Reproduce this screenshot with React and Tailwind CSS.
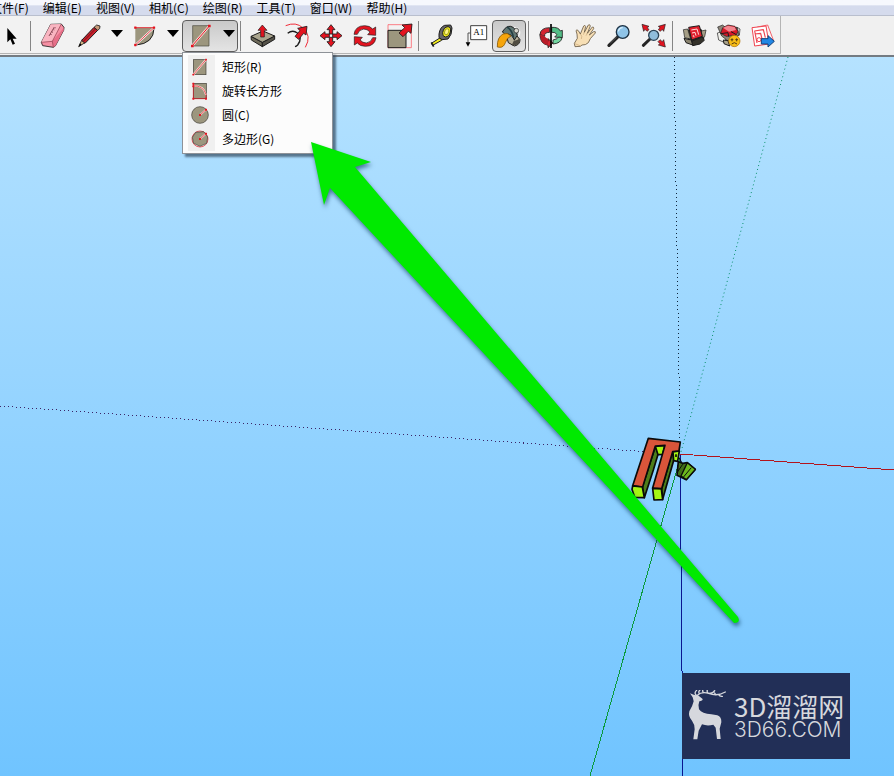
const MENUS = ['文件(F)', '编辑(E)', '视图(V)', '相机(C)', '绘图(R)', '工具(T)', '窗口(W)', '帮助(H)']

const RED = '#e3131f'
const INK = '#1c1c1c'
const CLAY = '#9c967e'

/* Toolbar drawings share a 90-unit grid shown at 30px */
function Icon({ children }) {
  return (
    <svg
      className="h-[30px] w-[30px] shrink-0"
      viewBox="0 0 90 90"
      fill="none"
      stroke={INK}
      strokeWidth="3"
      strokeLinejoin="round"
      aria-hidden="true"
    >
      {children}
    </svg>
  )
}

function Dots({ points, size = 7 }) {
  return points.map(([x, y]) => (
    <rect key={`${x}-${y}`} x={x - size / 2} y={y - size / 2} width={size} height={size} rx="1" fill={RED} stroke="none" />
  ))
}

const SelectIcon = () => (
  <Icon>
    <path d="M34 21V64L43 55L50 71L57 68L50 53H62Z" fill="#000" stroke="none" />
  </Icon>
)

const EraserIcon = () => (
  <Icon>
    <path d="M38 10L70 9L78 19L77 28L52 75L46 79L14 74L10 64Z" fill="#f58fa3" strokeWidth="2.5" />
    <path d="M38 10L70 9L43 60L10 64Z" fill="#f9b5c1" stroke="none" />
    <path d="M43 60L78 20L77 28L52 75L46 79Z" fill="#e66f88" stroke="none" />
    <path d="M10 64L43 61L70 9M43 61L46 79" strokeWidth="2" stroke="#8d3c4c" />
    <path d="M49 18L33 45M53 20L50 22M49 27L46 26M45 34L40 32M41 41L36 39" strokeWidth="3" stroke="#8a4a58" />
  </Icon>
)

const PencilIcon = () => (
  <Icon>
    <path d="M20 77L29 58L39 65Z" fill="#d9b98a" strokeWidth="2.5" />
    <path d="M29 58L66 19L77 28L39 67Z" fill="#c8202c" strokeWidth="3" />
    <path d="M34 61L72 22" stroke="#7b1018" strokeWidth="3" />
    <path d="M66 19L74 12L84 15L83 23L77 28Z" fill="#c79a77" strokeWidth="2.5" />
    <path d="M20 77L24 67L29 71Z" fill="#000" stroke="none" />
  </Icon>
)

const ArcIcon = () => (
  <Icon>
    <path d="M22 20H78Q78 68 22 72Z" fill={CLAY} stroke="none" />
    <path d="M78 22Q77 68 24 72" strokeWidth="3" />
    <path d="M22 72L78 20" stroke="#fff" strokeWidth="6" />
    <path d="M22 20H78L22 72" stroke={RED} strokeWidth="2.5" />
    <Dots points={[[22, 20], [78, 20], [22, 72]]} />
  </Icon>
)

const RectangleIcon = () => (
  <Icon>
    <rect x="26" y="14" width="49" height="61" fill={CLAY} strokeWidth="2" stroke="#4a483e" />
    <path d="M24 75L76 15" stroke="#fbe3df" strokeWidth="7" />
    <path d="M24 75L76 15" stroke={RED} strokeWidth="3" />
    <Dots points={[[25, 75], [76, 15]]} size={8} />
  </Icon>
)

const PushPullIcon = () => (
  <Icon>
    <path d="M9 46L43 64V77L10 57Z" fill="#6f6b5a" />
    <path d="M43 64L80 45V55L43 77Z" fill="#57544a" />
    <path d="M9 46L45 30L80 45L43 64Z" fill="#aaa58e" />
    <path d="M43 12L57 28H49V48H38V28H30Z" fill={RED} strokeWidth="2" />
  </Icon>
)

const OffsetIcon = () => (
  <Icon>
    <path d="M11 14Q42 1 63 21Q90 44 70 79" stroke="#f02b38" />
    <path d="M17 37Q32 25 46 36Q63 50 47 72Q43 76 39 77" strokeWidth="4" />
    <path d="M75 16L72 42L65 37L50 55L39 46L54 29L47 22Z" fill={RED} strokeWidth="2.5" />
  </Icon>
)

const MoveIcon = () => (
  <Icon>
    {[0, 90, 180, 270].map((angle) => (
      <path
        key={angle}
        d="M45 11L57 26H50V39H40V26H33Z"
        transform={`rotate(${angle} 45 44)`}
        fill={RED}
        strokeWidth="2.5"
      />
    ))}
  </Icon>
)

const RotateIcon = () => (
  <Icon>
    {[0, 180].map((angle) => (
      <path
        key={angle}
        d="M12 40Q16 14 44 14Q60 14 68 24L77 18V43L53 41L60 33Q52 24 41 24Q26 26 22 40Z"
        transform={`rotate(${angle} 45 45)`}
        fill={RED}
        strokeWidth="2"
      />
    ))}
  </Icon>
)

const ScaleIcon = () => (
  <Icon>
    <rect x="12" y="11" width="70" height="69" stroke="#ff4550" strokeWidth="2" />
    <rect x="12" y="28" width="54" height="52" fill={CLAY} />
    <path d="M84 9L81 37L73 31L57 47L45 36L62 20L54 12Z" fill={RED} strokeWidth="2.5" />
  </Icon>
)

const TapeIcon = () => (
  <Icon>
    <path d="M16 67L43 50L47 58L20 73Z" fill="#f4ee1c" />
    <path d="M16 64L23 77" strokeWidth="5" />
    <path d="M39 39Q42 18 56 13L74 12L78 21Q78 42 66 54L48 56L39 50Z" fill="#67666a" />
    <path d="M50 35Q53 18 66 17Q76 18 73 33Q70 47 58 48Q48 46 50 35Z" fill="#f4ee1c" />
    <ellipse cx="62" cy="32" rx="6" ry="9" fill="#fff68a" stroke="#a8a51a" transform="rotate(20 62 32)" />
  </Icon>
)

const TextIcon = () => (
  <Icon>
    <rect x="32" y="14" width="48" height="42" fill="#fff" strokeWidth="2.5" />
    <path d="M32 36H24V65" stroke="#555" strokeWidth="3" />
    <path d="M17 64H31L24 77Z" fill="#000" stroke="none" />
    <text x="56" y="43" fontSize="27" textAnchor="middle" fontFamily="Liberation Serif, serif" fill="#000" stroke="none">
      A1
    </text>
  </Icon>
)

const PaintIcon = () => (
  <Icon>
    <path d="M37 39Q52 13 71 22Q82 35 73 45" stroke="#f5f5f5" strokeWidth="4" />
    <path d="M37 42L60 34L78 56Q78 72 61 75L43 65Z" fill="#b8b19a" strokeWidth="3" />
    <path d="M25 33Q36 14 50 16Q66 20 70 43L61 57Q53 36 33 39Z" fill="#617774" strokeWidth="3" />
    <path d="M39 18Q55 27 58 49" stroke="#243f43" strokeWidth="5" />
    <circle cx="67" cy="29" r="7" fill="#d9d9d0" strokeWidth="2" />
    <path d="M60 58Q70 60 77 52L78 62Q68 76 53 73Z" fill="#514d42" stroke="none" />
    <path d="M10 78Q9 49 27 39Q40 33 51 45Q38 51 34 65Q29 79 18 79Z" fill="#f6a50b" stroke="#8a5c0c" strokeWidth="2.5" />
  </Icon>
)

const OrbitIcon = () => (
  <Icon>
    <path d="M47 19Q68 18 73 30L79 28V50L56 48L63 41Q58 32 47 34Z" fill="#53bd87" strokeWidth="2.5" />
    <path d="M78 50Q75 67 51 69V57Q66 54 68 48Z" fill="#73d7a1" strokeWidth="2.5" />
    <path d="M41 20Q14 20 12 40Q12 57 36 61V53L51 66L36 80V73Q11 68 12 40L26 46Q24 34 41 34Z" fill="#d42431" strokeWidth="2.5" />
    <path d="M12 40L26 46Q29 52 36 53V73Q13 68 12 40Z" fill="#b81c28" stroke="none" />
    <path d="M45 9V81" stroke="#000" strokeWidth="5" />
  </Icon>
)

const HandIcon = () => (
  <Icon>
    <path
      d="M13 67L22 52Q22 38 18 29Q20 24 25 29L31 39L41 15Q45 11 47 16L43 34L55 12Q60 9 61 15L52 37L67 18Q72 17 71 23L58 42L71 32Q78 30 76 36L61 53L55 65Q47 73 36 72L31 76L15 77Z"
      fill="#f7dfb5"
      stroke="#6b5b45"
      strokeWidth="2.5"
    />
    <path d="M31 39Q38 45 34 54M40 41L43 34M48 44L52 37M15 68L32 75" stroke="#c6a679" strokeWidth="2" />
  </Icon>
)

const ZoomIcon = () => (
  <Icon>
    <path d="M15 73L40 49" stroke="#252525" strokeWidth="10" strokeLinecap="round" />
    <path d="M19 66L38 48" stroke="#77797b" strokeWidth="2" />
    <circle cx="56" cy="33" r="19" fill="#8fc4e8" stroke="#1e3345" strokeWidth="4" />
    <path d="M43 31Q46 20 56 20" stroke="#dbf1ff" strokeWidth="4" />
  </Icon>
)

const ZoomExtentsIcon = () => (
  <Icon>
    <path d="M16 73L36 54" stroke="#252525" strokeWidth="9" strokeLinecap="round" />
    <circle cx="47" cy="43" r="15" fill="#8fbddb" stroke="#2c4355" strokeWidth="4" />
    <path d="M12 10L33 16L28 20L33 26L27 31L21 25L17 31Z" fill={RED} strokeWidth="2" />
    <path d="M82 10L61 16L66 20L61 26L67 31L73 25L77 31Z" fill={RED} strokeWidth="2" />
    <path d="M82 78L61 72L66 68L60 62L66 56L73 62L77 56Z" fill={RED} strokeWidth="2" />
  </Icon>
)

const WarehouseIcon = () => (
  <Icon>
    <path d="M20 28L64 26L72 52L46 66L26 58Z" fill="#4a463b" />
    <path d="M10 26L23 24L32 54L14 50ZM64 30L78 27L74 47L67 50Z" fill="#a59e86" strokeWidth="2" />
    <path d="M26 19L58 14L67 46L35 57Z" fill="#e01f2c" strokeWidth="3" />
    <path d="M34 27L51 24L56 41M36 36L45 34L48 44M38 45L41 44L42 49" stroke="#ffd9d9" strokeWidth="3" />
    <path d="M12 52L34 57L38 72L18 65Z" fill="#8a8470" />
    <path d="M36 60L67 48L73 58L60 69L38 74Z" fill="#34322a" />
  </Icon>
)

const ExtensionIcon = () => (
  <Icon>
    <path d="M10 36L25 32L36 50L33 65L14 57ZM68 18L78 24L76 43L65 47Z" fill="#f0f0ec" strokeWidth="2" />
    <path d="M11 18L26 12L37 22L70 20L75 42L42 60L23 45Z" fill="#8d867a" strokeWidth="2" />
    <path d="M26 20L42 12L63 16L72 31L66 43L37 46L20 37Z" fill="#d71828" strokeWidth="2" />
    <path d="M27 20L42 14L62 18L66 27L45 32Z" fill="#f38790" stroke="none" />
    <path d="M20 38L42 35L44 47M51 32L67 41" strokeWidth="3" />
    <path d="M28 57L42 59L47 75L30 68Z" fill="#aaa38b" />
    <circle cx="61" cy="60" r="17" fill="#f8bd17" stroke="#a76b00" strokeWidth="2" />
    <path d="M54 52V61M50 56H58M68 52V61M64 56H72M53 69Q61 61 69 69" stroke="#543c12" />
  </Icon>
)

const LayoutIcon = () => (
  <Icon>
    <path d="M28 18L59 12L76 57L31 74Z" fill="#fff5f5" stroke="#ef4450" strokeWidth="2.5" />
    <path d="M12 20L54 15L63 69L20 75Z" fill="#fff" stroke="#ef4450" strokeWidth="3" />
    <path d="M19 30L46 26L52 50M20 39L38 37L42 54M20 30L27 66" stroke="#ef4450" strokeWidth="3.5" />
    <circle cx="33" cy="56" r="6" stroke="#ef4450" />
    <path d="M40 53H60V44L79 61L60 78V69H40Z" fill="#2187e5" stroke="#123f78" />
  </Icon>
)

/* Each inner list is a run of tools between two separators */
const TOOL_GROUPS = [
  [{ name: '选择', icon: SelectIcon }],
  [
    { name: '擦除', icon: EraserIcon },
    { name: '铅笔', icon: PencilIcon, menu: true },
    { name: '圆弧', icon: ArcIcon, menu: true },
    { name: '矩形', icon: RectangleIcon, menu: true, open: true },
  ],
  [
    { name: '推拉', icon: PushPullIcon },
    { name: '偏移', icon: OffsetIcon },
    { name: '移动', icon: MoveIcon },
    { name: '旋转', icon: RotateIcon },
    { name: '缩放', icon: ScaleIcon },
  ],
  [
    { name: '卷尺', icon: TapeIcon },
    { name: '文字', icon: TextIcon },
    { name: '材质', icon: PaintIcon, active: true },
  ],
  [
    { name: '环绕观察', icon: OrbitIcon },
    { name: '平移', icon: HandIcon },
    { name: '镜头缩放', icon: ZoomIcon },
    { name: '充满视窗', icon: ZoomExtentsIcon },
  ],
  [
    { name: '模型库', icon: WarehouseIcon },
    { name: '扩展程序库', icon: ExtensionIcon },
    { name: '布局', icon: LayoutIcon },
  ],
]

function ShapeIcon({ children }) {
  return (
    <svg className="h-6 w-6" viewBox="0 0 72 72" fill="none" stroke="#3f3d35" strokeWidth="2" aria-hidden="true">
      {children}
    </svg>
  )
}

const SHAPES = [
  {
    label: '矩形(R)',
    icon: (
      <ShapeIcon>
        <rect x="16" y="14" width="38" height="45" fill={CLAY} />
        <path d="M16 59L54 14" stroke="#fbe3df" strokeWidth="6" />
        <path d="M16 59L54 14" stroke={RED} />
        <Dots points={[[16, 59], [54, 14]]} size={5} />
      </ShapeIcon>
    ),
  },
  {
    label: '旋转长方形',
    icon: (
      <ShapeIcon>
        <rect x="16" y="13" width="39" height="46" fill={CLAY} />
        <path d="M16 20Q49 20 54 48" stroke="#fbe3df" strokeWidth="5" />
        <path d="M16 13V59H54V46Q46 20 16 20" stroke={RED} />
        <Dots points={[[16, 14], [16, 22], [16, 59], [54, 59]]} size={6} />
      </ShapeIcon>
    ),
  },
  {
    label: '圆(C)',
    icon: (
      <ShapeIcon>
        <circle cx="36" cy="36" r="25" fill={CLAY} />
        <path d="M36 36L54 20" stroke="#fbe3df" strokeWidth="5" />
        <path d="M36 36L54 20" stroke={RED} />
        <Dots points={[[36, 36], [54, 20]]} size={6} />
      </ShapeIcon>
    ),
  },
  {
    label: '多边形(G)',
    icon: (
      <ShapeIcon>
        <circle cx="36" cy="36" r="24" stroke={RED} />
        <path d="M23 16L47 14L59 30L56 49L36 58L17 49L13 31Z" fill={CLAY} />
        <path d="M36 36L54 20" stroke="#fbe3df" strokeWidth="5" />
        <path d="M36 36L54 20" stroke={RED} />
        <Dots points={[[36, 36], [54, 20]]} size={6} />
      </ShapeIcon>
    ),
  },
]

function ShapeMenu() {
  return (
    <ul
      role="menu"
      aria-label="形状"
      className="absolute top-8 left-0 w-[151px] border border-[#8e9298] bg-[#fcfcfc] py-0.5 shadow-[3px_3px_2px_rgba(40,60,80,0.65)]"
    >
      {SHAPES.map(({ label, icon }) => (
        <li key={label} role="none">
          <button type="button" role="menuitem" className="flex h-6 w-full items-center gap-[7px] pl-[5px] text-xs text-black">
            <span className="w-[27px] bg-[#f0f0f0]">{icon}</span>
            {label}
          </button>
        </li>
      ))}
    </ul>
  )
}

function ToolButton({ name, icon: ToolIcon, menu, open, active }) {
  const pressed = open || active
  return (
    <div className="relative">
      <button
        type="button"
        aria-label={name}
        aria-haspopup={menu ? 'menu' : undefined}
        aria-expanded={menu ? Boolean(open) : undefined}
        aria-pressed={active}
        className={
          pressed
            ? 'flex h-8 items-center rounded-sm border border-[#5e5e5e] bg-gradient-to-b from-[#c9c9c9] to-[#e4e4e4] px-px'
            : 'flex h-8 items-center px-0.5'
        }
      >
        <ToolIcon />
        {menu && (
          <span className="flex w-[22px] justify-end pr-px pb-1">
            <svg className="h-[7px] w-3" viewBox="0 0 12 7" aria-hidden="true">
              <path d="M0 0H12L6 7Z" fill="#000" />
            </svg>
          </span>
        )}
      </button>
      {open && <ShapeMenu />}
    </div>
  )
}

function Toolbar() {
  return (
    <div className="relative z-10 border-b-2 border-[#747b82] bg-[#f0f0f0] pb-px">
      <div
        role="toolbar"
        aria-label="工具栏"
        className="-ml-1.5 flex h-[38px] w-fit items-center border-r border-b border-[#b4b4b4] bg-[#f2f2f2] pt-0.5"
      >
        {TOOL_GROUPS.map((group, i) => (
          <div key={group[0].name} className="flex items-center">
            {i > 0 && (
              <div role="separator" className="w-2 pl-0.5">
                <div className="h-[30px] w-px bg-[#858585]" />
              </div>
            )}
            {group.map((tool) => (
              <ToolButton key={tool.name} {...tool} />
            ))}
          </div>
        ))}
      </div>
    </div>
  )
}

function MenuBar() {
  return (
    <nav
      aria-label="主菜单"
      className="h-4 border-b border-[#b9bfce] bg-gradient-to-b from-[#f6f8fd] from-30% to-[#d5dbed] to-40%"
    >
      <div className="-ml-2.5 flex gap-3.5">
        {MENUS.map((label) => (
          <button key={label} type="button" className="shrink-0 text-xs leading-4 text-black">
            {label}
          </button>
        ))}
      </div>
    </nav>
  )
}

function Scene() {
  return (
    <svg
      className="absolute inset-0 h-full w-full"
      viewBox="0 57 894 719"
      preserveAspectRatio="xMinYMin slice"
      role="img"
      aria-label="模型视图"
    >
      {/* Axes */}
      <g fill="none" strokeWidth="1" shapeRendering="crispEdges">
        <path d="M674 57L680 440" stroke="#10253c" strokeDasharray="1 3" />
        <path d="M0 406L679 454" stroke="#3b2468" strokeDasharray="1 3" />
        <path d="M680 454L894 470" stroke="#b3131b" />
        <path d="M681 455L590 776" stroke="#0a9a3c" />
        <path d="M680 455L683 776" stroke="#0a1690" />
      </g>
      <path d="M788 57L681 452" fill="none" stroke="#08906a" strokeDasharray="1 3" />

      {/* Model */}
      <g transform="translate(600 420) scale(0.3333)" stroke="#0a0a0a" strokeWidth="5" strokeLinejoin="round">
        <path d="M166 80L175 100L160 150L133 233L127 200Z" fill="#4d7d1a" />
        <path d="M166 79L195 76L188 103L174 104Z" fill="#a5f614" />
        <path d="M217 95L222 118L188 238L185 206Z" fill="#4d7d1a" />
        <path d="M145 55L241 66L237 93L218 95L185 206L158 204L195 76L166 78L128 201L98 197Z" fill="#d9553a" />
        <path d="M98 198L127 201L133 233L104 232L96 208Z" fill="#a5f614" />
        <path d="M158 205L184 207L188 239L162 240Z" fill="#a5f614" />
        <path d="M219 96L238 93L233 124L221 122Z" fill="#a5f614" />
        <path d="M228 103V111" />
        <path d="M235 125L248 130L262 128L286 148L259 179L231 166Z" fill="#426e18" />
        <path d="M262 128L286 148L259 179L243 168Z" fill="#6cb81d" strokeWidth="4" />
        <path d="M274 143L249 173M237 112L248 133L231 158" fill="none" strokeWidth="3" />
      </g>
    </svg>
  )
}

/* Lies over the open menu, so it is a layer apart from the scene */
function Pointer() {
  return (
    <svg
      className="pointer-events-none absolute inset-0 z-20 h-full w-full"
      viewBox="0 57 894 719"
      preserveAspectRatio="xMinYMin slice"
      aria-hidden="true"
    >
      <path
        className="drop-shadow-[1px_3px_2px_rgba(0,50,80,0.6)]"
        d="M311 142L371 162L355 167L738 617Q741 623 734 623L330 188L324 205Z"
        fill="#00ea00"
      />
    </svg>
  )
}

function Watermark() {
  return (
    <div className="absolute right-11 bottom-[17px] flex h-[86px] w-[168px] items-center gap-1.5 bg-[#222f57] pl-1.5 text-[#d6d8dd]">
      <svg className="h-[52px] w-10 shrink-0" viewBox="0 0 120 156" aria-hidden="true">
        <path
          d="M6 10L19 15L30 16L44 27Q44 33 34 34Q29 46 33 58Q42 71 70 73L88 76Q101 81 100 97L95 116L98 147H87L83 113L76 104Q58 109 42 103L32 122L28 148H16L20 118Q20 102 12 92Q0 80 4 64Q14 48 17 34L14 22Z"
          fill="currentColor"
        />
        <path
          d="M25 16Q17 9 26 1M28 16Q41 4 62 10Q88 20 112 6M34 11Q30 5 36 0M47 8Q42 4 45 -1M60 9Q56 5 58 0M64 10Q76 10 80 2M84 15L80 9M92 14Q95 20 103 19"
          fill="none"
          stroke="currentColor"
          strokeWidth="4"
          strokeLinecap="round"
          overflow="visible"
        />
      </svg>
      <div className="whitespace-nowrap">
        <p className="text-[26px] leading-7">3D溜溜网</p>
        <p className="font-['Inter',sans-serif] text-[21px] leading-5 font-light">3D66.COM</p>
      </div>
    </div>
  )
}

export default function App() {
  return (
    <div className="flex min-h-screen flex-col font-['Noto_Sans_CJK_SC',sans-serif]">
      <MenuBar />
      <Toolbar />
      <main className="relative flex-1 overflow-hidden bg-gradient-to-b from-[#b5e2ff] to-[#70c4ff]">
        <Scene />
        <Watermark />
        <Pointer />
      </main>
    </div>
  )
}
